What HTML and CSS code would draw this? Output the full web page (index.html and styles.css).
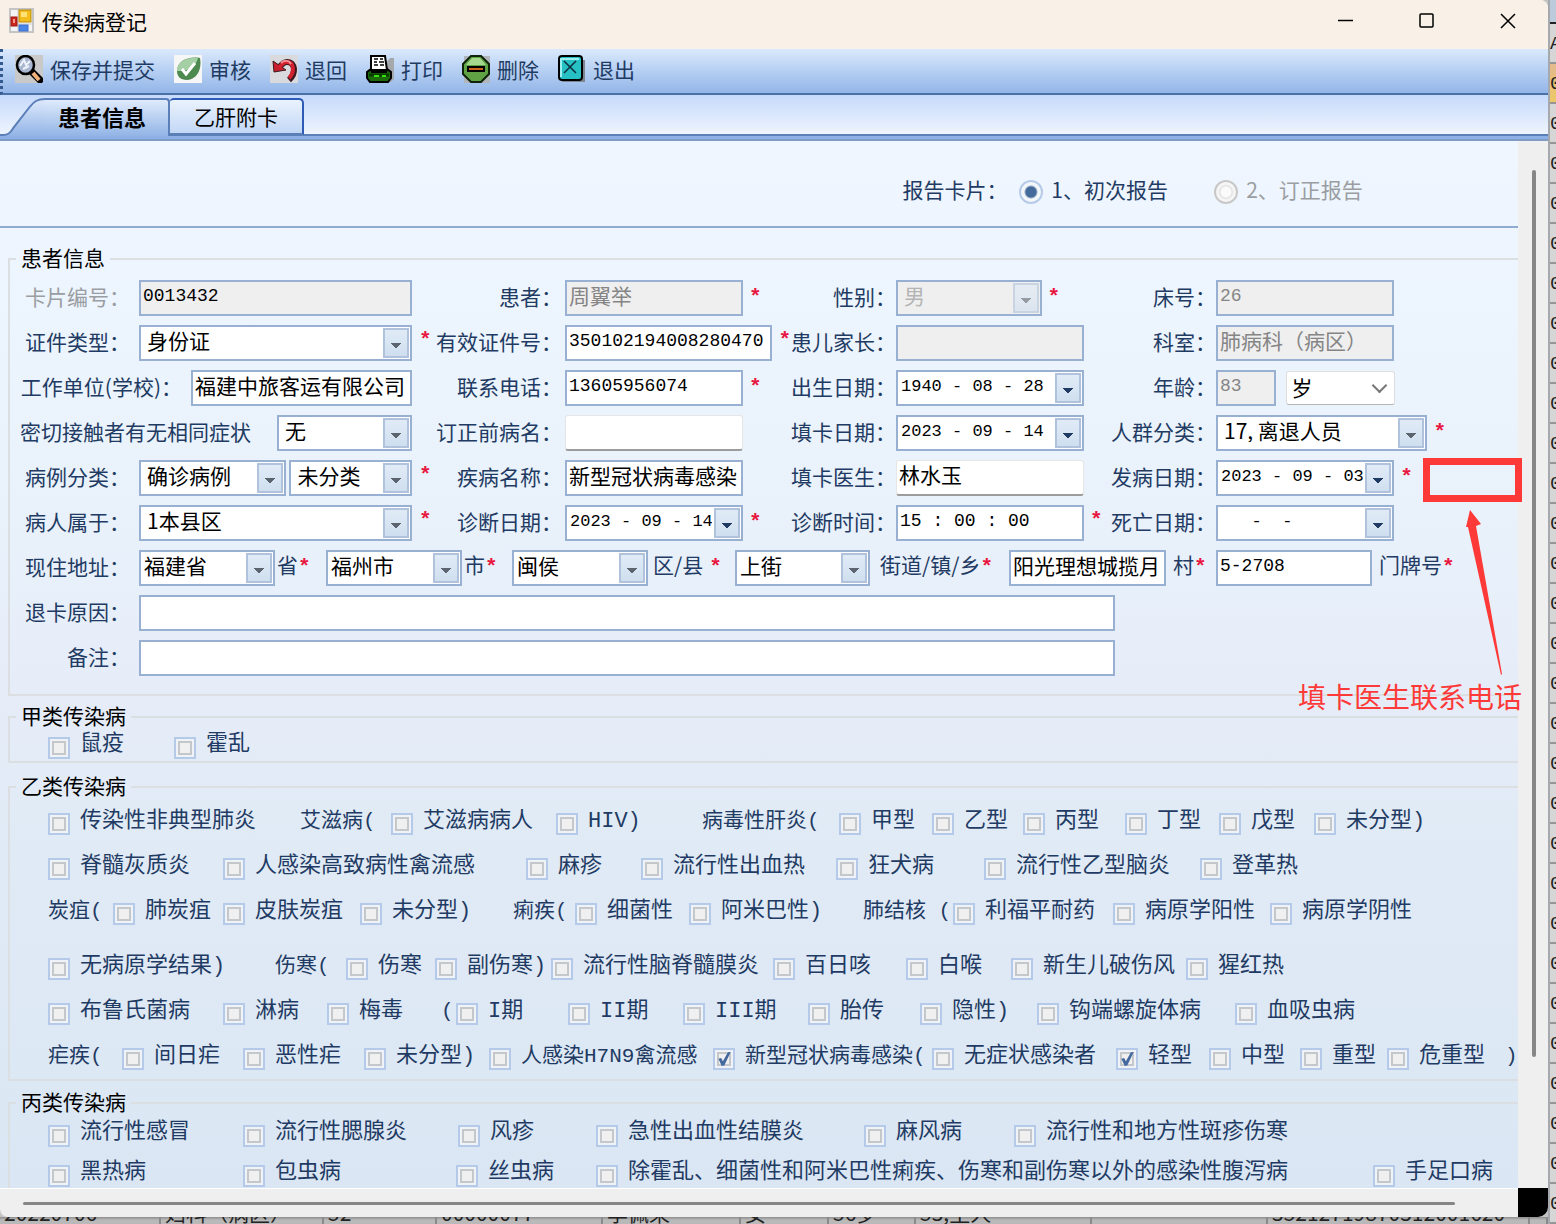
FILE: index.html
```html
<!DOCTYPE html>
<html lang="zh-CN">
<head>
  <meta charset="UTF-8">
  <meta name="viewport" content="width=device-width, initial-scale=1.0">
  <title>传染病登记</title>
  <link rel="stylesheet" href="styles.css">
</head>
<body>
  <div class="window">
    <header class="titlebar">
      <svg class="app-icon" width="25" height="25" viewBox="0 0 25 25">
        <rect x="1" y="1" width="23" height="23" fill="#f4f4f4" stroke="#c4c4c4" stroke-width="2"/>
        <path d="M9 2v21M2 16h21" stroke="#d0d0d0"/>
        <rect x="10" y="2" width="12" height="12" fill="#f4bd1c" stroke="#b98a0d"/>
        <rect x="12" y="4" width="6" height="5" fill="#ffe27a"/>
        <rect x="2" y="9" width="6" height="9" fill="#c9261c" stroke="#9c1710"/>
        <rect x="4" y="11" width="2" height="4" fill="#f39a90"/>
        <rect x="10" y="17" width="9" height="6" fill="#4a86e8" stroke="#3a6cc9"/>
      </svg>
      <h1>传染病登记</h1>
      <div class="window-buttons">
        <button type="button" aria-label="最小化"><svg width="16" height="16" viewBox="0 0 16 16"><path d="M0 7.500h15"/></svg></button>
        <button type="button" aria-label="最大化"><svg width="16" height="16" viewBox="0 0 16 16"><rect x="1" y="1" width="13" height="13" rx="1"/></svg></button>
        <button type="button" aria-label="关闭"><svg width="16" height="16" viewBox="0 0 16 16"><path d="M1 1l14 14M15 1L1 15"/></svg></button>
      </div>
    </header>

    <nav class="toolbar">
      <button type="button">
        <svg width="28" height="28" viewBox="0 0 28 28"><rect width="28" height="28" fill="#c9c9c9"/><path d="M16 16l9 9" stroke="#000" stroke-width="7" stroke-linecap="round"/><path d="M18 18l6 7" stroke="#f0b27a" stroke-width="4"/><ellipse cx="10.500" cy="10" rx="8.500" ry="9" fill="#a9b6cf" stroke="#000" stroke-width="2.500"/><path d="M5 11l4-6 2 5 4-4M8 14l6-3" stroke="#eef3fb" stroke-width="2" fill="none"/></svg>
        保存并提交
      </button>
      <button type="button">
        <svg width="28" height="28" viewBox="0 0 28 28"><rect width="28" height="28" fill="#f6f6f6"/><path d="M3 16C3 6 14 1 26 3c2 10-2 21-13 22C6 25 3 21 3 16z" fill="#4c8a50"/><path d="M3 14C5 6 13 2 24 3c-2 8-9 14-21 13z" fill="#a5cfa4"/><path d="M8 14l4 5L21 8" fill="none" stroke="#fff" stroke-width="3"/></svg>
        审核
      </button>
      <button type="button">
        <svg width="28" height="28" viewBox="0 0 28 28"><rect width="28" height="28" fill="#d9dade"/><path d="M19 25c7-6 7-18-2-18-4 0-6 3-8 6" fill="none" stroke="#3a1a20" stroke-width="6"/><path d="M3 6l1 11 12-2z" fill="#c81f2c" stroke="#3a1a20"/><path d="M19 23c6-6 5-16-2-16-4 0-6 3-8 6" fill="none" stroke="#d3202e" stroke-width="4"/><path d="M11 8c3-3 8-3 10 1" fill="none" stroke="#f58b92" stroke-width="2"/></svg>
        退回
      </button>
      <button type="button">
        <svg width="28" height="28" viewBox="0 0 28 28"><path d="M4 27h21l3-3V3h-4z" fill="#a5a9ae"/><path d="M5 1h14l2 14H5z" fill="#fff" stroke="#000" stroke-width="2"/><path d="M8 4h4m2 0h3M8 7h3m2 0h5M8 10h4m2 0h4" stroke="#000" stroke-width="1.500"/><path d="M1 17l4-3 1 3h14l1-3 4 3v6l-3 4H4l-3-4z" fill="#1d6a08" stroke="#000" stroke-width="2"/><path d="M3 20h20" stroke="#063b00" stroke-width="3"/><path d="M8 21h5m3 0h4" stroke="#37e012" stroke-width="2"/></svg>
        打印
      </button>
      <button type="button">
        <svg width="28" height="28" viewBox="0 0 28 28"><rect x="2" y="1" width="26" height="27" fill="#b1b6bc"/><path d="M9 1h10l8 8v10l-8 8H9l-8-8V9z" fill="#5fa345" stroke="#10230a" stroke-width="2"/><path d="M10 3h8l6 7H4z" fill="#a5d78e"/><rect x="6" y="12" width="16" height="4" fill="#c9661a" stroke="#000" stroke-width="2"/></svg>
        删除
      </button>
      <button type="button">
        <svg width="28" height="28" viewBox="0 0 28 28"><path d="M4 5h23v22H4z" fill="#7d868f"/><rect x="1" y="1" width="23" height="24" rx="3" fill="#27c0c4" stroke="#000" stroke-width="2"/><path d="M3 22V4h18" fill="none" stroke="#9bf0ef" stroke-width="2"/><path d="M6 6l12 12M18 6L6 18" stroke="#0c2c3c" stroke-width="1.500"/></svg>
        退出
      </button>
    </nav>

    <div class="tabs" role="tablist">
      <button type="button" class="tab tab-active" role="tab">
        <svg width="42" height="38" viewBox="0 0 42 40" preserveAspectRatio="none">
          <defs><linearGradient id="slope" x1="0" y1="0" x2="0" y2="1"><stop offset="0" stop-color="#dfeafc"/><stop offset="1" stop-color="#92b4e6"/></linearGradient></defs>
          <path d="M0 39C5 39 7 37 10 32L27 9C31 4 34 1 42 1v39H0z" fill="url(#slope)"/>
          <path d="M0 39C5 39 7 37 10 32L27 9C31 4 34 1 42 1" fill="none" stroke="#5b7fb8" stroke-width="2"/>
        </svg>
        <span>患者信息</span>
      </button>
      <button type="button" class="tab tab-plain" role="tab">乙肝附卡</button>
    </div>

    <div class="view">
      <form class="card">
        <div class="report-type">
          <span class="caption">报告卡片：</span>
          <label><input type="radio" name="report" checked>1、初次报告</label>
          <label class="dim"><input type="radio" name="report" disabled>2、订正报告</label>
        </div>

        <fieldset class="patient">
          <legend>患者信息</legend>

          <div class="row">
            <label class="cap l1 dim" for="card-no">卡片编号：</label>
            <div class="f1"><input id="card-no" class="num locked" value="0013432" readonly></div>
            <label class="cap l2" for="name">患者：</label>
            <div class="f2"><input id="name" class="short" value="周翼举" disabled><i>*</i></div>
            <label class="cap l3" for="sex">性别：</label>
            <div class="f3"><span class="combo medium off"><select id="sex" disabled><option>男</option></select></span><i>*</i></div>
            <label class="cap l4" for="bed">床号：</label>
            <div class="f4"><input id="bed" class="num w-base" value="26" disabled></div>
          </div>

          <div class="row">
            <label class="cap l1" for="id-type">证件类型：</label>
            <div class="f1"><span class="combo"><select id="id-type"><option>身份证</option></select></span></div>
            <label class="cap l2" for="id-no"><i>*</i>有效证件号：</label>
            <div class="f2"><input id="id-no" class="num" value="350102194008280470"></div>
            <label class="cap l3" for="parent"><i>*</i>患儿家长：</label>
            <div class="f3"><input id="parent" class="wide" disabled></div>
            <label class="cap l4" for="dept">科室：</label>
            <div class="f4"><input id="dept" class="w-base" value="肺病科（病区）" disabled></div>
          </div>

          <div class="row">
            <label class="cap l1 to-unit" for="unit">工作单位(学校)：</label>
            <div class="f1 from-unit"><input id="unit" value="福建中旅客运有限公司"></div>
            <label class="cap l2" for="phone">联系电话：</label>
            <div class="f2"><input id="phone" class="num short" value="13605956074"><i>*</i></div>
            <label class="cap l3" for="birth">出生日期：</label>
            <div class="f3"><span class="date wide"><input id="birth" value="1940 - 08 - 28"><button type="button" aria-label="选择出生日期"></button></span></div>
            <label class="cap l4" for="age">年龄：</label>
            <div class="f4"><input id="age" class="num w-age" value="83" disabled><span class="flat-combo"><select aria-label="年龄单位"><option>岁</option></select></span></div>
          </div>

          <div class="row">
            <label class="cap l1 to-contact" for="contact">密切接触者有无相同症状</label>
            <div class="f1 from-contact"><span class="combo"><select id="contact"><option>无</option></select></span></div>
            <label class="cap l2" for="old-name">订正前病名：</label>
            <div class="f2"><input id="old-name" class="flat short"></div>
            <label class="cap l3" for="fill-date">填卡日期：</label>
            <div class="f3"><span class="date wide"><input id="fill-date" value="2023 - 09 - 14"><button type="button" aria-label="选择填卡日期"></button></span></div>
            <label class="cap l4" for="crowd">人群分类：</label>
            <div class="f4"><span class="combo w-crowd"><select id="crowd"><option>17, 离退人员</option></select></span><i>*</i></div>
          </div>

          <div class="row">
            <label class="cap l1" for="case-type">病例分类：</label>
            <div class="f1 split"><span class="combo"><select id="case-type"><option>确诊病例</option></select></span><span class="combo"><select aria-label="病例细类"><option>未分类</option></select></span></div>
            <label class="cap l2" for="disease"><i>*</i>疾病名称：</label>
            <div class="f2"><input id="disease" class="short" value="新型冠状病毒感染"></div>
            <label class="cap l3" for="doctor">填卡医生：</label>
            <div class="f3"><input id="doctor" class="flat wide" value="林水玉"></div>
            <label class="cap l4" for="onset">发病日期：</label>
            <div class="f4"><span class="date w-base"><input id="onset" value="2023 - 09 - 03"><button type="button" aria-label="选择发病日期"></button></span><i>*</i></div>
          </div>

          <div class="row">
            <label class="cap l1" for="region">病人属于：</label>
            <div class="f1"><span class="combo"><select id="region"><option>1本县区</option></select></span></div>
            <label class="cap l2" for="diag-date"><i>*</i>诊断日期：</label>
            <div class="f2"><span class="date short"><input id="diag-date" value="2023 - 09 - 14"><button type="button" aria-label="选择诊断日期"></button></span><i>*</i></div>
            <label class="cap l3" for="diag-time">诊断时间：</label>
            <div class="f3"><input id="diag-time" class="num wide" value="15 : 00 : 00"></div>
            <label class="cap l4 death" for="death"><i>*</i>死亡日期：</label>
            <div class="f4"><span class="date w-base"><input id="death" value="   -  -"><button type="button" aria-label="选择死亡日期"></button></span></div>
          </div>

          <div class="row address">
            <label class="cap" for="province">现住地址：</label>
            <span class="combo slim"><select id="province"><option>福建省</option></select></span>
            <span class="unit">省<i>*</i></span>
            <span class="combo slim"><select aria-label="市"><option>福州市</option></select></span>
            <span class="unit">市<i>*</i></span>
            <span class="combo slim"><select aria-label="区/县"><option>闽侯</option></select></span>
            <span class="unit spaced">区/县<i>*</i></span>
            <span class="combo slim"><select aria-label="街道/镇/乡"><option>上街</option></select></span>
            <span class="unit street">街道/镇/乡<i>*</i></span>
            <input aria-label="村" value="阳光理想城揽月">
            <span class="unit village">村<i>*</i></span>
            <input class="num" aria-label="门牌号" value="5-2708">
            <span class="unit village">门牌号<i>*</i></span>
          </div>

          <div class="row long">
            <label class="cap" for="reason">退卡原因：</label>
            <input id="reason">
          </div>
          <div class="row long">
            <label class="cap" for="note">备注：</label>
            <input id="note">
          </div>
        </fieldset>

        <fieldset class="class-a">
          <legend>甲类传染病</legend>
          <div class="checks a1">
            <label><input type="checkbox">鼠疫</label>
            <label><input type="checkbox">霍乱</label>
          </div>
        </fieldset>

        <fieldset class="class-b">
          <legend>乙类传染病</legend>
          <div class="block">
            <div class="checks b1">
              <label><input type="checkbox">传染性非典型肺炎</label>
              <span>艾滋病(</span>
              <label><input type="checkbox">艾滋病病人</label>
              <label><input type="checkbox">HIV)</label>
              <span>病毒性肝炎(</span>
              <label><input type="checkbox">甲型</label>
              <label><input type="checkbox">乙型</label>
              <label><input type="checkbox">丙型</label>
              <label><input type="checkbox">丁型</label>
              <label><input type="checkbox">戊型</label>
              <label><input type="checkbox">未分型)</label>
            </div>
            <div class="checks b2">
              <label><input type="checkbox">脊髓灰质炎</label>
              <label><input type="checkbox">人感染高致病性禽流感</label>
              <label><input type="checkbox">麻疹</label>
              <label><input type="checkbox">流行性出血热</label>
              <label><input type="checkbox">狂犬病</label>
              <label><input type="checkbox">流行性乙型脑炎</label>
              <label><input type="checkbox">登革热</label>
            </div>
            <div class="checks b3">
              <span>炭疽(</span>
              <label><input type="checkbox">肺炭疽</label>
              <label><input type="checkbox">皮肤炭疽</label>
              <label><input type="checkbox">未分型)</label>
              <span>痢疾(</span>
              <label><input type="checkbox">细菌性</label>
              <label><input type="checkbox">阿米巴性)</label>
              <span>肺结核 (</span>
              <label><input type="checkbox">利福平耐药</label>
              <label><input type="checkbox">病原学阳性</label>
              <label><input type="checkbox">病原学阴性</label>
            </div>
          </div>
          <div class="block">
            <div class="checks b4">
              <label><input type="checkbox">无病原学结果)</label>
              <span>伤寒(</span>
              <label><input type="checkbox">伤寒</label>
              <label><input type="checkbox">副伤寒)</label>
              <label><input type="checkbox">流行性脑脊髓膜炎</label>
              <label><input type="checkbox">百日咳</label>
              <label><input type="checkbox">白喉</label>
              <label><input type="checkbox">新生儿破伤风</label>
              <label><input type="checkbox">猩红热</label>
            </div>
            <div class="checks b5">
              <label><input type="checkbox">布鲁氏菌病</label>
              <label><input type="checkbox">淋病</label>
              <label><input type="checkbox">梅毒</label>
              <span>(</span>
              <label><input type="checkbox">I期</label>
              <label><input type="checkbox">II期</label>
              <label><input type="checkbox">III期</label>
              <label><input type="checkbox">胎传</label>
              <label><input type="checkbox">隐性)</label>
              <label><input type="checkbox">钩端螺旋体病</label>
              <label><input type="checkbox">血吸虫病</label>
            </div>
            <div class="checks b6">
              <span>疟疾(</span>
              <label><input type="checkbox">间日疟</label>
              <label><input type="checkbox">恶性疟</label>
              <label><input type="checkbox">未分型)</label>
              <label class="tight"><input type="checkbox">人感染H7N9禽流感</label>
              <label class="tight"><input type="checkbox" checked>新型冠状病毒感染(</label>
              <label><input type="checkbox">无症状感染者</label>
              <label><input type="checkbox" checked>轻型</label>
              <label><input type="checkbox">中型</label>
              <label><input type="checkbox">重型</label>
              <label><input type="checkbox">危重型</label>
              <span>)</span>
            </div>
          </div>
        </fieldset>

        <fieldset class="class-c">
          <legend>丙类传染病</legend>
          <div class="checks c1">
            <label><input type="checkbox">流行性感冒</label>
            <label><input type="checkbox">流行性腮腺炎</label>
            <label><input type="checkbox">风疹</label>
            <label><input type="checkbox">急性出血性结膜炎</label>
            <label><input type="checkbox">麻风病</label>
            <label><input type="checkbox">流行性和地方性斑疹伤寒</label>
          </div>
          <div class="checks c2">
            <label><input type="checkbox">黑热病</label>
            <label><input type="checkbox">包虫病</label>
            <label><input type="checkbox">丝虫病</label>
            <label><input type="checkbox">除霍乱、细菌性和阿米巴性痢疾、伤寒和副伤寒以外的感染性腹泻病</label>
            <label><input type="checkbox">手足口病</label>
          </div>
        </fieldset>
      </form>
      <div class="bar-y"><div class="thumb"></div></div>
      <div class="bar-x"><div class="thumb"></div></div>
      <div class="corner"></div>
    </div>

    <!-- note pinned over the form -->
    <div class="note">
      <div class="note-box"></div>
      <svg class="note-arrow" width="50" height="168" viewBox="0 0 50 168">
        <path d="M14 0L25 14L20 16L46 164L45 165L12 17L10 17Z" fill="#fd3a37"/>
      </svg>
      <p>填卡医生联系电话</p>
    </div>
  </div>

  <!-- list window showing behind the dialog -->
  <aside class="behind-right">
    <span class="head"></span><span>A</span><span class="picked">03</span>
    <span>03</span><span>03</span><span>03</span><span>03</span><span>03</span><span>03</span><span>03</span>
    <span>03</span><span>03</span><span>03</span><span>03</span><span>03</span><span>03</span><span>03</span>
    <span>03</span><span>03</span><span>03</span><span>03</span><span>03</span><span>03</span><span>03</span>
    <span>03</span><span>03</span><span>03</span><span>03</span><span>03</span><span>03</span><span>03</span>
  </aside>
  <aside class="behind-bottom">
    <span>20220706</span><span>妇科（病区）</span><span>52</span><span>00000077</span><span>李佩荣</span><span>女</span><span>56岁</span><span>53,主人</span><span></span><span>35212719870312001620</span><span></span>
  </aside>
</body>
</html>
```
FILE: styles.css
```css
*,
*::before,
*::after {
  box-sizing: border-box;
}

body {
  margin: 0;
  height: 100vh;
  overflow: hidden;
  display: grid;
  grid-template-columns: minmax(0, 1fr) 8px;
  grid-template-rows: minmax(0, 1fr) 7px;
  background: #c4c4c4;
  font-family: "Noto Sans CJK SC", sans-serif;
  font-size: 21px;
  line-height: 24px;
  color: #1f3b63;
  white-space: nowrap;
}

button,
input,
select {
  font: inherit;
  color: inherit;
  margin: 0;
}

i {
  color: #e8173f;
  font-family: "Liberation Mono", monospace;
  font-style: normal;
  font-weight: bold;
}

.window {
  position: relative;
  display: flex;
  flex-direction: column;
  min-width: 0;
  overflow: hidden;
  background: #efefef;
  border-radius: 0 8px 10px 8px;
}

/* Title bar */
.titlebar {
  display: flex;
  align-items: center;
  height: 49px;
  padding: 0 0 8px 9px;
  background: #f9f1e7;
  color: #000;
}

.titlebar h1 {
  margin: 0 0 0 8px;
  font-size: 21px;
  font-weight: normal;
}

.window-buttons {
  display: flex;
  margin-left: auto;
}

.window-buttons button {
  width: 81px;
  height: 41px;
  padding: 0;
  border: 0;
  background: none;
}

.window-buttons svg {
  display: block;
  margin: auto;
  fill: none;
  stroke: #000;
  stroke-width: 1.5;
}

/* Toolbar */
.toolbar {
  display: flex;
  align-items: center;
  gap: 19px;
  height: 46px;
  padding: 0 12px 4px;
  border-bottom: 2px solid #4a70a8;
  border-left: 3px dotted #33598f;
  background: linear-gradient(#dbe9fc, #b9d2f4 45%, #93b5e8);
}

.toolbar button {
  display: flex;
  align-items: center;
  gap: 7px;
  padding: 0;
  border: 0;
  background: none;
  line-height: 22px;
}

/* Tabs */
.tabs {
  display: flex;
  align-items: flex-start;
  height: 46px;
  padding: 3px 0 0 3px;
  background: linear-gradient(#c6dafb, #eef4fe 39px, #5b80b8 39px, #5b80b8 41px, #8eb0e6 41px, #8eb0e6 44px, #7f9cc4 44px);
}

.tab {
  padding: 0;
  border: 0;
  color: #000;
}

.tab-active {
  display: flex;
  background: none;
  font-size: 22px;
  font-weight: bold;
}

.tab-active span {
  height: 38px;
  padding: 4px 22px 0 13px;
  border-top: 2px solid #5b7fb8;
  border-right: 2px solid #5b7fb8;
  border-radius: 0 4px 0 0;
  background: linear-gradient(#dfeafc, #92b4e6);
}

.tab-plain {
  width: 134px;
  height: 37px;
  padding-bottom: 2px;
  border: 2px solid #2d5bb5;
  border-bottom-color: #5b80b8;
  border-left: 0;
  border-radius: 4px 5px 0 0;
  background: linear-gradient(#eaf2fd, #c3d8f6);
}

/* Scrolling view */
.view {
  flex: 1;
  min-height: 0;
  display: grid;
  grid-template-columns: minmax(0, 1fr) 30px;
  grid-template-rows: minmax(0, 1fr) 29px;
}

.card {
  overflow: hidden;
  background: linear-gradient(#eff6ff, #eaf3fc 30%, #e5ecf8 55%, #e1ebf6 64%, #dde8f5 88%, #dae6f3);
}

.bar-y {
  padding: 29px 12px 131px 14px;
  background: #efefef;
}

.bar-x {
  padding: 13px 63px 12px 23px;
  border-top: 1px solid #fff;
}

.thumb {
  height: 100%;
  border-radius: 2px;
  background: #868686;
}

.corner {
  background: #000;
}

.dim {
  color: #9a9da2;
}

.report-type {
  display: grid;
  grid-template-columns: minmax(0, 139fr) minmax(0, 195fr) minmax(0, 304fr);
  align-items: center;
  height: 87px;
  padding: 10px 0 0 58%;
  border-bottom: 2px solid #8facd0;
}

.report-type .caption {
  padding-left: 22px;
}

.report-type label {
  display: flex;
  align-items: center;
  gap: 8px;
}

input[type="radio"] {
  appearance: none;
  width: 24px;
  height: 24px;
  margin-top: 6px;
  border: 2px solid #b5cbe8;
  border-radius: 50%;
  background: radial-gradient(circle, #44699b 0 5px, #f4f7fa 7px);
}

input[type="radio"]:disabled {
  border-color: #c8c8c8;
  background: radial-gradient(circle, #fafafa 5px, #e2e2e2 6px, #f6f6f6 8px);
}

/* Groups */
fieldset {
  min-width: 0;
  margin: 0 0 0 8px;
  padding: 0;
  border: 2px solid #dcdfe1;
  border-right: 0;
}

legend {
  margin-left: 6px;
  padding: 0 5px 4px;
  line-height: 20px;
  color: #000;
}

.patient {
  margin-top: 19px;
  padding: 9px 0 18px;
}

.class-a {
  margin-top: 9px;
}

.class-b {
  margin-top: 12px;
}

.class-c {
  margin-top: 10px;
}

/* Patient form */
.row {
  display: grid;
  grid-template-columns:
    minmax(0, 129fr) minmax(0, 52fr) minmax(0, 86fr) minmax(0, 135fr) minmax(0, 153fr)
    minmax(0, 207fr) minmax(0, 124fr) minmax(0, 194fr) minmax(0, 126fr) minmax(0, 302fr);
  align-items: center;
  height: 36px;
  margin-bottom: 9px;
}

.row:last-child {
  margin-bottom: 0;
}

.row > * {
  grid-row: 1;
}

.cap {
  display: flex;
  justify-content: flex-end;
  padding-bottom: 4px;
}

.cap i {
  margin: 0 auto 0 7px;
}

.l1,
.address .cap,
.long .cap {
  grid-column: 1;
  padding-right: 9px;
}

.f1 { grid-column: 2 / 5; }
.l2 { grid-column: 5; padding-right: 3px; }
.f2 { grid-column: 6; }
.l3 { grid-column: 7; }
.f3 { grid-column: 8; }
.l4 { grid-column: 9; }
.f4 { grid-column: 10; }
.to-unit { grid-column: 1 / 3; }
.from-unit { grid-column: 3 / 5; }
.to-contact { grid-column: 1 / 4; padding-right: 26px; }
.from-contact { grid-column: 4; }

.death i {
  margin-left: 0;
}

.f1,
.f2,
.f3,
.f4 {
  display: flex;
  align-items: center;
}

.f2 i,
.f3 i,
.f4 i {
  margin-left: 6px;
}

.split {
  gap: 3px;
}

.split .combo:first-child {
  flex: 0 0 54%;
}

.row input,
.combo,
.date {
  width: 100%;
  min-width: 0;
  height: 36px;
  border: 2px solid #98b1d3;
  border-radius: 0;
  background: #fff;
  color: #000;
}

.row input {
  padding: 0 2px 7px;
}

.row .short { width: 86%; }
.row .wide { width: 97%; }
.row .medium { width: 75%; }
.row .w-base { width: 59%; }
.row .w-age { width: 20%; }
.row .w-crowd { width: 70%; }

.row input:disabled,
.row input.locked {
  background: #efefef;
}

.row input:disabled {
  color: #858585;
}

.row .num {
  padding-bottom: 4px;
  font-family: "Liberation Mono", monospace;
  font-size: 18px;
}

.row input.flat {
  border: 1px solid #e6e6e6;
  border-bottom: 2px solid #9c9c9c;
  border-radius: 3px;
}

.combo {
  position: relative;
  display: flex;
}

.combo select {
  appearance: none;
  width: 100%;
  padding: 0 28px 6px 6px;
  border: 0;
  background: none;
  color: inherit;
}

.combo.slim select {
  padding-left: 3px;
}

.combo.off {
  background: #efefef;
  color: #9c9c9c;
}

/* drop button with its small triangle */
.combo::after,
.date button {
  width: 26px;
  height: 30px;
  border: 2px solid #b1c3dc;
  background:
    linear-gradient(to bottom right, #5c6470 50%, transparent 51%) 11px 13px / 5px 5px no-repeat,
    linear-gradient(to bottom left, #5c6470 50%, transparent 51%) 6px 13px / 5px 5px no-repeat,
    linear-gradient(#e1ebf7, #cfdfef);
}

.combo::after {
  content: "";
  position: absolute;
  top: 1px;
  right: 1px;
  pointer-events: none;
}

.combo.off::after {
  opacity: 0.6;
}

.date {
  display: flex;
  padding: 1px;
}

.row .date input {
  flex: 1;
  height: 30px;
  padding-bottom: 4px;
  border: 0;
  font-family: "Liberation Mono", monospace;
  font-size: 17px;
}

.date button {
  flex: none;
  padding: 0;
  background:
    linear-gradient(to bottom right, #1f3b63 50%, transparent 51%) 11px 13px / 5px 5px no-repeat,
    linear-gradient(to bottom left, #1f3b63 50%, transparent 51%) 6px 13px / 5px 5px no-repeat,
    linear-gradient(#e1ebf7, #cfdfef);
}

.flat-combo {
  position: relative;
  width: 36%;
  margin-left: 10px;
  border: 1px solid #dedede;
  border-bottom-color: #b4b4b4;
  border-radius: 3px;
  background: #fff;
  color: #000;
}

.flat-combo select {
  appearance: none;
  width: 100%;
  height: 32px;
  padding: 0 4px 2px;
  border: 0;
  background: none;
}

.flat-combo::after {
  content: "";
  position: absolute;
  top: 8px;
  right: 9px;
  width: 11px;
  height: 11px;
  border: solid #777;
  border-width: 0 2px 2px 0;
  transform: rotate(45deg);
  pointer-events: none;
}

.address {
  grid-template-columns:
    minmax(0, 129fr) minmax(0, 136fr) minmax(0, 51fr) minmax(0, 136fr) minmax(0, 50fr)
    minmax(0, 136fr) minmax(0, 87fr) minmax(0, 135fr) minmax(0, 139fr) minmax(0, 157fr)
    minmax(0, 50fr) minmax(0, 156fr) minmax(0, 146fr);
}

.unit {
  padding: 0 0 4px 2px;
}

.spaced {
  padding-left: 5px;
}

.spaced i {
  margin-left: 6px;
}

.street {
  padding-left: 10px;
}

.village {
  padding-left: 7px;
}

.long {
  grid-template-columns: minmax(0, 129fr) minmax(0, 976fr) minmax(0, 403fr);
}

/* Disease check lists */
.checks {
  display: grid;
  align-items: center;
  height: 45px;
  padding-left: 38px;
  font-family: "Liberation Mono", "Noto Sans CJK SC", monospace;
  font-size: 22px;
}

.checks > * {
  min-width: 0;
}

.checks span,
.checks .tight {
  font-size: 21px;
}

.checks label {
  display: flex;
  align-items: center;
  gap: 10px;
}

.class-a .checks {
  height: 32px;
}

.class-c .checks {
  height: 36px;
  margin-bottom: 4px;
}

.block + .block {
  margin-top: 10px;
}

input[type="checkbox"] {
  appearance: none;
  position: relative;
  flex: none;
  width: 22px;
  height: 22px;
  margin-top: 5px;
  padding: 2px;
  border: 2px solid #b5cae8;
  background: #eff3f7;
}

input[type="checkbox"]::before {
  content: "";
  display: block;
  height: 14px;
  border: 2px solid #c5c8cb;
  background: #f0f0f0;
}

input[type="checkbox"]:checked::after {
  content: "";
  position: absolute;
  top: 2px;
  left: 2px;
  width: 14px;
  height: 14px;
  background: #44699f;
  clip-path: polygon(10% 48%, 30% 42%, 42% 66%, 78% 2%, 98% 0, 52% 96%, 34% 100%);
}

.a1 { grid-template-columns: 126fr 1344fr; }
.b1 { grid-template-columns: 252fr 91fr 165fr 146fr 137fr 93fr 91fr 102fr 94fr 95fr 204fr; }
.b2 { grid-template-columns: 175fr 303fr 115fr 195fr 148fr 216fr 318fr; }
.b3 { grid-template-columns: 65fr 110fr 137fr 153fr 62fr 114fr 174fr 90fr 160fr 157fr 248fr; }
.b4 { grid-template-columns: 227fr 71fr 89fr 116fr 222fr 133fr 105fr 175fr 332fr; }
.b5 { grid-template-columns: 175fr 104fr 114fr 15fr 112fr 115fr 125fr 112fr 117fr 198fr 283fr; }
.b6 { grid-template-columns: 74fr 121fr 121fr 125fr 224fr 219fr 184fr 93fr 91fr 87fr 118fr 13fr; }
.c1 { grid-template-columns: 195fr 215fr 138fr 268fr 150fr 504fr; }
.c2 { grid-template-columns: 195fr 213fr 140fr 777fr 145fr; }

/* Red note */
.note {
  position: absolute;
  top: 458px;
  right: 26px;
  color: #fd3a37;
  pointer-events: none;
}

.note-box {
  width: 99px;
  height: 44px;
  margin-left: auto;
  border: 7px solid #fd3a37;
}

.note-arrow {
  display: block;
  margin: 8px 16px 0 auto;
}

.note p {
  margin: 2px 0 0;
  font-size: 28px;
  line-height: 32px;
}

/* List behind the dialog */
.behind-right {
  grid-row: 1 / 3;
  grid-column: 2;
  overflow: hidden;
  border-left: 2px solid #a5a8ac;
  background: #d6d6d6;
  color: #222;
  font-family: "Liberation Mono", monospace;
  font-size: 19px;
}

.behind-right span {
  display: block;
  height: 40px;
  overflow: hidden;
  border-bottom: 2px solid #969696;
  line-height: 40px;
}

.behind-right .head {
  height: 24px;
  border-color: #222;
  background: #bccbdb;
}

.behind-right .picked {
  background: linear-gradient(#e3b98f, #ecc964);
}

.behind-bottom {
  grid-row: 2;
  grid-column: 1;
  display: grid;
  grid-template-columns: 161fr 163fr 113fr 166fr 138fr 88fr 87fr 176fr 176fr 262fr 18fr;
  background: linear-gradient(#8e8e8e, #b9b9b9 3px);
  color: #222;
}

.behind-bottom span {
  display: flex;
  align-items: flex-end;
  height: 7px;
  min-width: 0;
  padding-left: 4px;
  overflow: hidden;
  border-right: 2px solid #8a8a8a;
}
```
